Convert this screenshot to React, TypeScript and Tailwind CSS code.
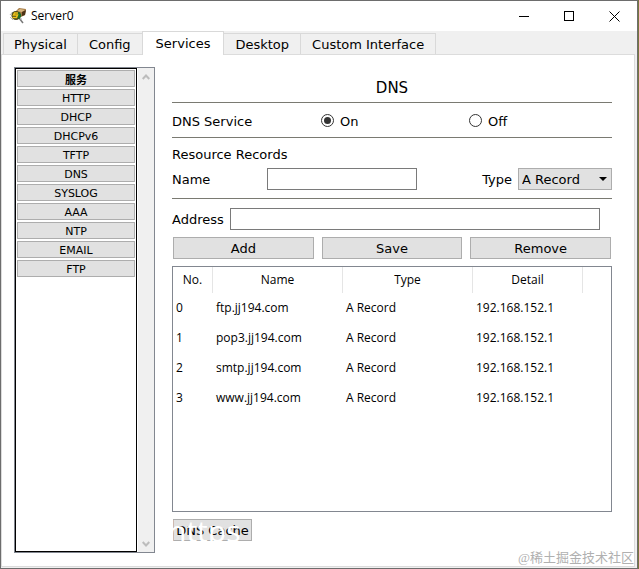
import { useState } from "react";

const tabs = ["Physical", "Config", "Services", "Desktop", "Custom Interface"];

const services = ["HTTP", "DHCP", "DHCPv6", "TFTP", "DNS", "SYSLOG", "AAA", "NTP", "EMAIL", "FTP"];

const records = [
  { name: "ftp.jj194.com", type: "A Record", detail: "192.168.152.1" },
  { name: "pop3.jj194.com", type: "A Record", detail: "192.168.152.1" },
  { name: "smtp.jj194.com", type: "A Record", detail: "192.168.152.1" },
  { name: "www.jj194.com", type: "A Record", detail: "192.168.152.1" },
];

const buttonStyle = "h-[22px] border border-[#adadad] bg-[#e1e1e1] pt-px text-center leading-5";
const inputStyle = "h-[22px] min-w-0 border border-[#7a7a7a] bg-white px-1 outline-none";

const AppIcon = () => (
  <svg className="h-4 w-[18px]" viewBox="0 0 18 16" aria-hidden="true">
    <path d="M7 3 10 0l7 1-1 6-4 2-6-2z" fill="#a47a45" />
    <path d="m8 3 3-2 5 1-3 2z" fill="#d9b780" />
    <path d="m13 4 4-2-1 5-3 1z" fill="#4d3216" />
    <path d="m10 10 4 5" stroke="#777" strokeWidth="1.5" />
    <path d="M11 11h2" stroke="#aaa" />
    <path d="M1 7c1-2 3-3 5-3" stroke="#b5b5b5" fill="none" />
    <circle cx="7" cy="7.5" r="4.5" fill="#4a4a1c" />
    <path d="M10 4c3 2 3 5 0 7l-2-2V6z" fill="#1d6b2b" />
    <path d="M9 5H5.500L4.500 7H8.500L7.500 9.500H3.500" stroke="#f0c419" strokeWidth="1.500" fill="none" />
    <path d="m1 9 3 3M1 6l1 1" stroke="#bbb" />
  </svg>
);

const TitleBar = () => (
  <header className="flex h-[30px] shrink-0 items-center bg-white pl-2">
    <AppIcon />
    <h1 className="flex-1 pl-1 font-['Open_Sans',sans-serif] text-[12px]">Server0</h1>
    <button aria-label="Minimize" className="flex h-full w-[45px] items-center justify-center">
      <svg width="11" height="11" viewBox="0 0 11 11" shapeRendering="crispEdges">
        <path d="M0 5.500h10" stroke="#000" />
      </svg>
    </button>
    <button aria-label="Maximize" className="flex h-full w-[45px] items-center justify-center">
      <svg width="11" height="11" viewBox="0 0 11 11" shapeRendering="crispEdges">
        <path d="M.5.5h9v9h-9z" fill="none" stroke="#000" />
      </svg>
    </button>
    <button aria-label="Close" className="flex h-full w-[45px] items-center justify-center">
      <svg width="11" height="11" viewBox="0 0 11 11">
        <path d="m.5.5 10 10m0-10-10 10" stroke="#000" />
      </svg>
    </button>
  </header>
);

const ScrollArrow = ({ up }: { up?: boolean }) => (
  <button aria-label={up ? "Scroll up" : "Scroll down"} className="flex h-[17px] items-center justify-center">
    <svg width="8" height="6" viewBox="0 0 8 6">
      <path d={up ? "m.7 5 3.300-3.500L7.300 5" : "M.7 1 4 4.500 7.300 1"} fill="none" stroke="#bdbdbd" strokeWidth="2" />
    </svg>
  </button>
);

const ServiceList = () => (
  <aside className="flex w-[141px] shrink-0 border border-[#828790]">
    <nav className="flex flex-1 flex-col gap-[2px] border border-black p-px text-[11px]">
      <h2 className="h-[17px] border border-[#adadad] bg-[#e1e1e1] text-center font-['Noto_Sans_CJK_SC',sans-serif] leading-4 font-bold">
        服务
      </h2>
      {services.map((service) => (
        <button key={service} className="h-[17px] border border-[#adadad] bg-[#e1e1e1] pt-px leading-[15px]">
          {service}
        </button>
      ))}
    </nav>
    <div className="ml-px flex w-4 flex-col justify-between bg-[#f0f0f0]">
      <ScrollArrow up />
      <ScrollArrow />
    </div>
  </aside>
);

const Radio = ({ label, checked, onChange }: { label: string; checked: boolean; onChange: () => void }) => (
  <label className="flex items-center gap-[6px] pl-px">
    <input
      type="radio"
      name="dns-service"
      checked={checked}
      onChange={onChange}
      className="flex h-[13px] w-[13px] appearance-none items-center justify-center rounded-full border border-[#333] before:h-[7px] before:w-[7px] before:rounded-full checked:before:bg-[#333]"
    />
    <span className="pt-[3px]">{label}</span>
  </label>
);

const RecordTable = () => (
  <div className="flex-1 border border-[#828790] font-['Open_Sans',sans-serif] text-[12px]">
    <table className="w-full table-fixed border-separate border-spacing-0 text-left">
      <colgroup>
        <col className="w-10" />
        <col className="w-[130px]" />
        <col className="w-[130px]" />
        <col className="w-[110px]" />
        <col />
      </colgroup>
      <thead>
        <tr className="h-[26px] text-center">
          {["No.", "Name", "Type", "Detail"].map((title) => (
            <th key={title} className="border-r border-[#e5e5e5] p-0 font-normal">
              {title}
            </th>
          ))}
          <th className="p-0" />
        </tr>
      </thead>
      <tbody>
        {records.map((record, i) => (
          <tr key={record.name} className="h-[30px]">
            <td className="p-0 pl-[3px]">{i}</td>
            <td className="p-0 pl-[3px]">{record.name}</td>
            <td className="p-0 pl-[3px]">{record.type}</td>
            <td className="p-0 pl-[3px]">{record.detail}</td>
            <td className="p-0" />
          </tr>
        ))}
      </tbody>
    </table>
  </div>
);

const DnsPanel = () => {
  const [enabled, setEnabled] = useState(true);

  return (
    <section className="flex min-w-0 flex-1 flex-col">
      <h2 className="h-[35px] pt-[11px] text-center text-[15px] leading-5">DNS</h2>
      <div className="grid h-[36px] grid-cols-3 items-center gap-1 border-y border-[#7a7a72]">
        <span className="pt-[3px]">DNS Service</span>
        <Radio label="On" checked={enabled} onChange={() => setEnabled(true)} />
        <Radio label="Off" checked={!enabled} onChange={() => setEnabled(false)} />
      </div>
      <h3 className="h-[30px] pt-[7px] leading-5">Resource Records</h3>
      <div className="flex items-center border-b border-[#7a7a72] pb-2">
        <label htmlFor="name" className="w-[95px] pt-[2px]">
          Name
        </label>
        <input id="name" className={`${inputStyle} w-[150px]`} />
        <label htmlFor="type" className="ml-auto pt-[2px] pr-[6px]">
          Type
        </label>
        <div className="relative">
          <select
            id="type"
            className="block h-[22px] w-[94px] appearance-none border border-[#adadad] bg-[#e1e1e1] pt-px pl-[3px] leading-5"
          >
            <option>A Record</option>
          </select>
          <svg className="pointer-events-none absolute top-[9px] right-[5px]" width="8" height="4" viewBox="0 0 8 4">
            <path d="M0 0h8L4 4z" fill="#000" />
          </svg>
        </div>
      </div>
      <div className="mt-[9px] flex items-center pr-3">
        <label htmlFor="address" className="w-[58px] pt-[2px]">
          Address
        </label>
        <input id="address" className={`${inputStyle} flex-1`} />
      </div>
      <div className="my-[7px] grid grid-cols-3 gap-2 px-px">
        <button className={buttonStyle}>Add</button>
        <button className={buttonStyle}>Save</button>
        <button className={buttonStyle}>Remove</button>
      </div>
      <RecordTable />
      <div className="relative mt-[7px] mb-3 flex pl-px">
        <button className={`${buttonStyle} w-[79px] whitespace-nowrap`}>
          <span className="flex justify-center">DNS Cache</span>
        </button>
        <span className="pointer-events-none absolute top-0 -left-1 font-['Open_Sans',sans-serif] text-[30px] leading-6 font-medium text-white">
          https
        </span>
      </div>
    </section>
  );
};

export default function App() {
  const [active, setActive] = useState("Services");

  return (
    <div className="min-h-screen bg-[#77773f] pr-px font-['DejaVu_Sans',Verdana,sans-serif] text-[13px] text-black">
      <div className="relative flex min-h-screen flex-col border border-[#6d6d6d] bg-[#f0f0f0]">
        <TitleBar />
        <div role="tablist" className="flex h-[23px] items-end pl-[2px]">
          {tabs.map((tab) => (
            <button
              key={tab}
              role="tab"
              aria-selected={tab === active}
              onClick={() => setActive(tab)}
              className={
                tab === active
                  ? "z-10 -mb-px -ml-px h-6 border border-b-0 border-[#d9d9d9] bg-white px-[13px] whitespace-nowrap"
                  : "h-[21px] border-t border-r border-[#d9d9d9] px-[11px] pt-px whitespace-nowrap first:border-l first:px-[10px]"
              }
            >
              {tab}
            </button>
          ))}
        </div>
        <main className="mr-[2px] mb-px flex flex-1 border border-[#dcdcdc] bg-white pt-3 pr-[22px] pl-3">
          <div className="mb-[13px] flex">
            <ServiceList />
          </div>
          <div className="flex min-w-0 flex-1 pb-[13px] pl-[17px]">
            <DnsPanel />
          </div>
        </main>
        <span className="pointer-events-none absolute right-[3px] bottom-0 font-['Liberation_Serif','Noto_Sans_CJK_SC',serif] text-[13px] leading-5 text-[#b0b0b0]">
          @稀土掘金技术社区
        </span>
      </div>
    </div>
  );
}
